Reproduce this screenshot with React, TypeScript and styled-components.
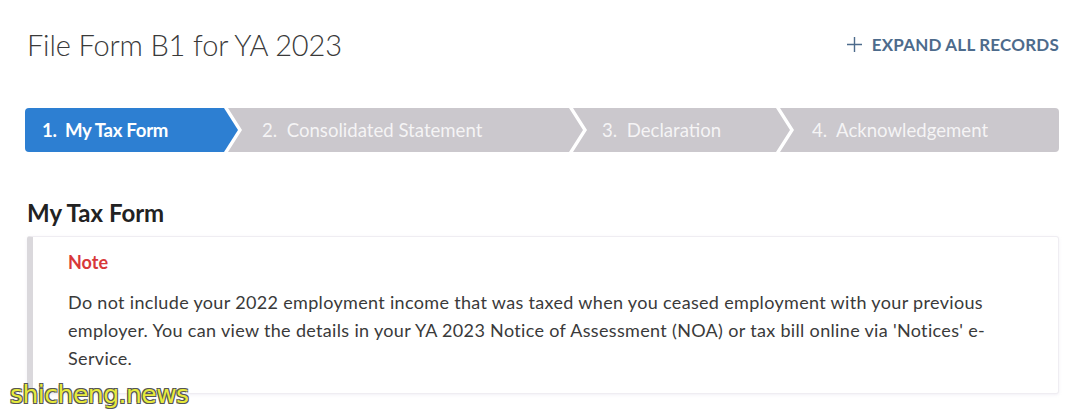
import styled, { createGlobalStyle } from "styled-components";

const GlobalStyle = createGlobalStyle`
    * {
        box-sizing: border-box;
    }
    body {
        margin: 0;
        background: #fff;
        font-family: "Lato", "Liberation Sans", sans-serif;
        color: #333;
    }
`;

const Page = styled.div`
    position: relative;
    width: 1080px;
    height: 410px;
    padding: 22px 21px 0 25px;
    overflow: hidden;
`;

const Header = styled.div`
    display: flex;
    align-items: center;
    justify-content: space-between;
    height: 44px;
    padding-left: 2px;
`;

const PageTitle = styled.h1`
    margin: 0;
    font-size: 29px;
    font-weight: 300;
    color: #3a3a3a;
    letter-spacing: -0.15px;
`;

const ExpandButton = styled.button`
    display: flex;
    align-items: center;
    gap: 10px;
    padding: 0;
    border: none;
    background: none;
    font-family: inherit;
    font-size: 17px;
    font-weight: 700;
    color: #4d6b8c;
    text-transform: uppercase;
    letter-spacing: 0.2px;
    cursor: pointer;
`;

const Stepper = styled.ol`
    display: flex;
    margin: 42px 0 0;
    padding: 0;
    list-style: none;
    height: 44px;
`;

const ARROW = 14;

const Step = styled.li<{ $active?: boolean; $first?: boolean; $last?: boolean; $width: number; $pad: number }>`
    display: flex;
    align-items: center;
    flex: 0 0 ${(p) => p.$width}px;
    margin-left: ${(p) => (p.$first ? 0 : -10)}px;
    padding-left: ${(p) => p.$pad}px;
    background: ${(p) => (p.$active ? "#2d7fd2" : "#cbc8cd")};
    color: ${(p) => (p.$active ? "#fff" : "rgba(255, 255, 255, 0.82)")};
    font-size: 18.6px;
    font-weight: ${(p) => (p.$active ? 700 : 400)};
    letter-spacing: ${(p) => (p.$active ? "-0.3px" : "0")};
    white-space: pre;
    border-radius: ${(p) => (p.$first ? "4px 0 0 4px" : p.$last ? "0 4px 4px 0" : "0")};
    clip-path: ${(p) => {
        const notch = p.$first ? "" : `, ${ARROW}px 50%`;
        if (p.$last) {
            return `polygon(0 0, 100% 0, 100% 100%, 0 100%${notch})`;
        }
        return `polygon(0 0, calc(100% - ${ARROW}px) 0, 100% 50%, calc(100% - ${ARROW}px) 100%, 0 100%${notch})`;
    }};
`;

const SectionTitle = styled.h2`
    margin: 48px 0 0 2px;
    font-size: 24px;
    font-weight: 700;
    color: #222;
    line-height: 26px;
`;

const NoteBox = styled.div`
    margin: 10px 0 0 2px;
    padding: 12px 68px 21px 35px;
    border: 1px solid #efedf2;
    border-left: 6px solid #dad8dc;
    border-radius: 3px;
    box-shadow: 0 1px 3px rgba(200, 190, 215, 0.25);
    background: #fff;
`;

const NoteLabel = styled.div`
    font-size: 18px;
    font-weight: 700;
    color: #d8383a;
    line-height: 26px;
`;

const NoteText = styled.p`
    margin: 13px 0 0;
    font-size: 18px;
    line-height: 28px;
    letter-spacing: 0.33px;
    color: #3a3a3a;
`;

const Watermark = styled.div`
    position: absolute;
    left: 10px;
    bottom: 1px;
    font-family: "DejaVu Sans", sans-serif;
    font-size: 25px;
    letter-spacing: -0.5px;
    color: #e6ea3c;
    text-shadow: -1px -1px 0 #555, 1px -1px 0 #555, -1px 1px 0 #555, 1px 1px 0 #555;
`;

const steps = [
    { label: "1.  My Tax Form", width: 213, pad: 17, active: true },
    { label: "2.  Consolidated Statement", width: 355, pad: 34 },
    { label: "3.  Declaration", width: 217, pad: 29 },
    { label: "4.  Acknowledgement", width: 279, pad: 32 },
];

const App = () => {
    return (
        <Page>
            <GlobalStyle />
            <Header>
                <PageTitle>File Form B1 for YA 2023</PageTitle>
                <ExpandButton>
                    <svg width="15" height="15" viewBox="0 0 15 15">
                        <path d="M7.5 0v15M0 7.5h15" stroke="#4d6b8c" strokeWidth="1.4" />
                    </svg>
                    Expand all records
                </ExpandButton>
            </Header>
            <Stepper>
                {steps.map((s, i) => (
                    <Step
                        key={s.label}
                        $active={s.active}
                        $first={i === 0}
                        $last={i === steps.length - 1}
                        $width={s.width}
                        $pad={s.pad}
                    >
                        {s.label}
                    </Step>
                ))}
            </Stepper>
            <SectionTitle>My Tax Form</SectionTitle>
            <NoteBox>
                <NoteLabel>Note</NoteLabel>
                <NoteText>
                    Do not include your 2022 employment income that was taxed when you ceased employment with your previous
                    employer. You can view the details in your YA 2023 Notice of Assessment (NOA) or tax bill online via 'Notices' e-Service.
                </NoteText>
            </NoteBox>
            <Watermark>shicheng.news</Watermark>
        </Page>
    );
};

export default App;
